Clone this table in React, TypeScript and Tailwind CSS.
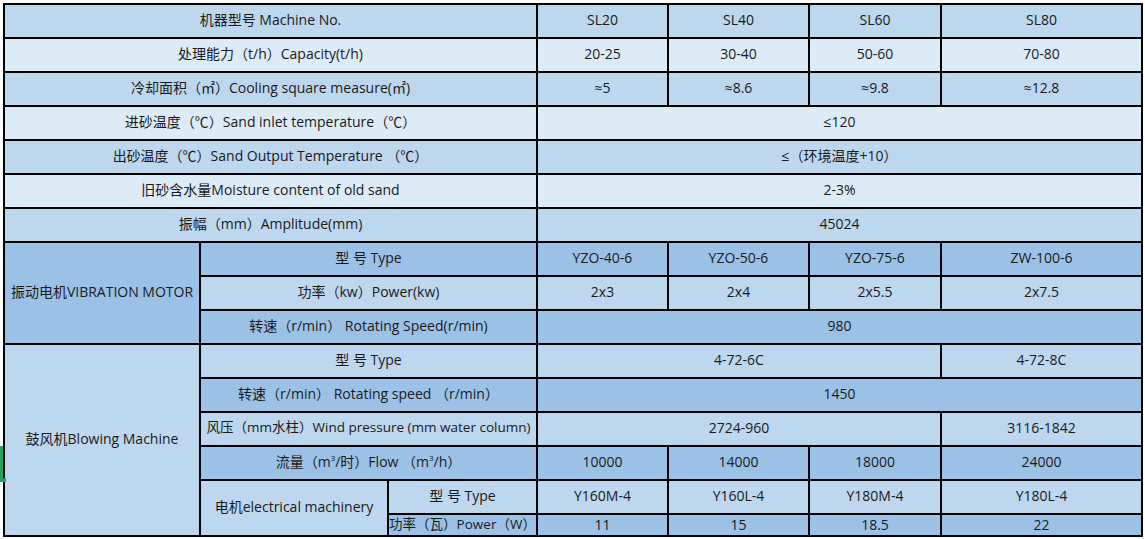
import React from 'react';

const DARK = 'bg-[#9bc2e6]';
const MID = 'bg-[#bdd7ee]';
const LIGHT = 'bg-[#ddebf7]';

interface CellProps {
  children?: React.ReactNode;
  className?: string;
  size?: string;
  pad?: string;
}

function Cell({ children, className = '', size = 'text-[14px]', pad = 'pb-[2px]' }: CellProps) {
  return (
    <div
      className={`flex items-center justify-center whitespace-nowrap overflow-visible leading-none text-[#1a1a1a] ${size} ${pad} ${className}`}
    >
      {children}
    </div>
  );
}

const simpleRows: { label: string; bg: string; values: string[] }[] = [
  { label: '机器型号 Machine No.', bg: MID, values: ['SL20', 'SL40', 'SL60', 'SL80'] },
  { label: '处理能力（t/h）Capacity(t/h)', bg: LIGHT, values: ['20-25', '30-40', '50-60', '70-80'] },
  { label: '冷却面积（㎡）Cooling square measure(㎡)', bg: MID, values: ['≈5', '≈8.6', '≈9.8', '≈12.8'] },
  { label: '进砂温度（℃）Sand inlet temperature（℃）', bg: LIGHT, values: ['≤120'] },
  { label: '出砂温度（℃）Sand Output Temperature （℃）', bg: MID, values: ['≤（环境温度+10）'] },
  { label: '旧砂含水量Moisture content of old sand', bg: LIGHT, values: ['2-3%'] },
  { label: '振幅（mm）Amplitude(mm)', bg: MID, values: ['45024'] },
];

export default function App() {
  return (
    <div
      className="relative min-h-[539px] bg-white pt-[3px] pl-[3px]"
      style={{ fontFamily: '"Open Sans", "Noto Sans CJK SC", sans-serif' }}
    >
      <div className="grid w-fit grid-cols-[194px_186px_147px_129px_139px_130px_199px] grid-rows-[repeat(15,32px)_20px] gap-[2px] bg-black p-[2px]">
        {simpleRows.map((row) => (
          <React.Fragment key={row.label}>
            <Cell className={`col-span-3 ${row.bg}`}>{row.label}</Cell>
            {row.values.length === 1 ? (
              <Cell className={`col-span-4 ${row.bg}`}>{row.values[0]}</Cell>
            ) : (
              row.values.map((v) => (
                <Cell key={v} className={row.bg}>
                  {v}
                </Cell>
              ))
            )}
          </React.Fragment>
        ))}

        {/* vibration motor */}
        <Cell className={`row-span-3 ${DARK}`}>振动电机VIBRATION MOTOR</Cell>
        <Cell className={`col-span-2 ${DARK}`}>型 号 Type</Cell>
        <Cell className={DARK}>YZO-40-6</Cell>
        <Cell className={DARK}>YZO-50-6</Cell>
        <Cell className={DARK}>YZO-75-6</Cell>
        <Cell className={DARK}>ZW-100-6</Cell>
        <Cell className={`col-span-2 ${MID}`}>功率（kw）Power(kw)</Cell>
        <Cell className={MID}>2x3</Cell>
        <Cell className={MID}>2x4</Cell>
        <Cell className={MID}>2x5.5</Cell>
        <Cell className={MID}>2x7.5</Cell>
        <Cell className={`col-span-2 ${DARK}`}>转速（r/min） Rotating Speed(r/min)</Cell>
        <Cell className={`col-span-4 ${DARK}`}>980</Cell>

        {/* blowing machine */}
        <Cell className={`row-span-6 ${MID}`}>鼓风机Blowing Machine</Cell>
        <Cell className={`col-span-2 ${MID}`}>型 号 Type</Cell>
        <Cell className={`col-span-3 ${MID}`}>4-72-6C</Cell>
        <Cell className={MID}>4-72-8C</Cell>
        <Cell className={`col-span-2 ${DARK}`}>转速（r/min） Rotating speed （r/min）</Cell>
        <Cell className={`col-span-4 ${DARK}`}>1450</Cell>
        <Cell size="text-[13.5px]" className={`col-span-2 ${MID}`}>
          风压（mm水柱）Wind pressure (mm water column)
        </Cell>
        <Cell className={`col-span-3 ${MID}`}>2724-960</Cell>
        <Cell className={MID}>3116-1842</Cell>
        <Cell className={`col-span-2 ${DARK}`}>
          流量（m<sup className="text-[8px]">3</sup>/时）Flow （m<sup className="text-[8px]">3</sup>/h）
        </Cell>
        <Cell className={DARK}>10000</Cell>
        <Cell className={DARK}>14000</Cell>
        <Cell className={DARK}>18000</Cell>
        <Cell className={DARK}>24000</Cell>
        <Cell className={`row-span-2 ${MID}`}>电机electrical machinery</Cell>
        <Cell className={MID}>型 号 Type</Cell>
        <Cell className={MID}>Y160M-4</Cell>
        <Cell className={MID}>Y160L-4</Cell>
        <Cell className={MID}>Y180M-4</Cell>
        <Cell className={MID}>Y180L-4</Cell>
        <Cell size="text-[13.5px]" pad="pb-0" className={DARK}>
          功率（瓦）Power（W）
        </Cell>
        <Cell pad="pb-0" className={DARK}>11</Cell>
        <Cell pad="pb-0" className={DARK}>15</Cell>
        <Cell pad="pb-0" className={DARK}>18.5</Cell>
        <Cell pad="pb-0" className={DARK}>22</Cell>
      </div>

      {/* spreadsheet selection marker */}
      <div className="absolute left-0 top-[446px] h-[34px] w-[3px] bg-[#21a366]" />
      <div className="absolute left-0 top-[478px] h-[4px] w-[6px] bg-[#21a366]" />
    </div>
  );
}
